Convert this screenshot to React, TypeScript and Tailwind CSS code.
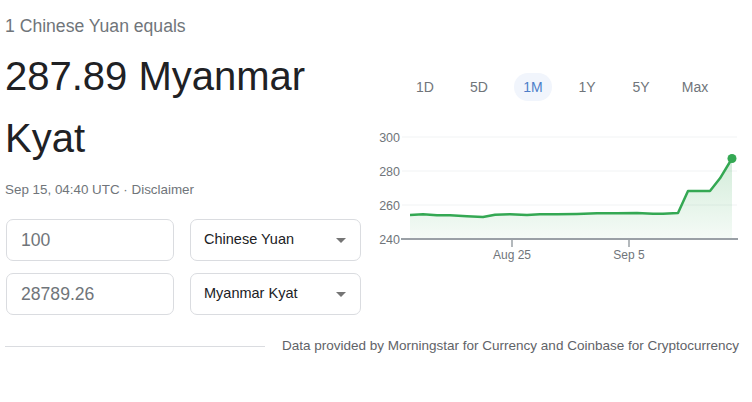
const line: [number, number][] = [
  [410, 215], [423, 214.3], [437, 215.3], [450, 215.3], [467, 216.3], [483, 217],
  [495, 214.7], [510, 214.3], [527, 215], [540, 214.3], [557, 214.3], [577, 214],
  [597, 213.3], [617, 213.3], [637, 213], [653, 213.7], [663, 213.7], [678, 213],
  [688, 191], [710, 191], [720, 178.3], [732, 158.5],
];

const tabs = ['1D', '5D', '1M', '1Y', '5Y', 'Max'];

const Chart = () => {
  const d = line.map(([x, y], i) => `${i ? 'L' : 'M'}${x} ${y}`).join(' ');
  const area = `${d} L732 239 L410 239 Z`;
  return (
    <svg width="382" height="150" viewBox="370 120 382 150" className="block">
      <defs>
        <linearGradient id="fill" x1="0" y1="0" x2="0" y2="1">
          <stop offset="0%" stopColor="#34a853" stopOpacity="0.22" />
          <stop offset="100%" stopColor="#34a853" stopOpacity="0.05" />
        </linearGradient>
      </defs>
      {[137, 171, 205].map((y) => (
        <line key={y} x1="402" x2="737" y1={y} y2={y} stroke="#f1f3f4" strokeWidth="1" />
      ))}
      {[
        ['300', 137],
        ['280', 171],
        ['260', 205],
        ['240', 239],
      ].map(([t, y]) => (
        <text
          key={t}
          x="400"
          y={Number(y) + 4.5}
          textAnchor="end"
          fontSize="12.5"
          fill="#70757a"
          fontFamily="'Liberation Sans', Arial, sans-serif"
        >
          {t}
        </text>
      ))}
      <path d={area} fill="url(#fill)" />
      <line x1="401" x2="738" y1="239" y2="239" stroke="#9aa0a6" strokeWidth="2" />
      <line x1="512" x2="512" y1="239" y2="247" stroke="#9aa0a6" strokeWidth="1.5" />
      <line x1="629" x2="629" y1="239" y2="247" stroke="#9aa0a6" strokeWidth="1.5" />
      <text x="512" y="259" textAnchor="middle" fontSize="12" fill="#70757a" fontFamily="'Liberation Sans', Arial, sans-serif">
        Aug 25
      </text>
      <text x="629" y="259" textAnchor="middle" fontSize="12" fill="#70757a" fontFamily="'Liberation Sans', Arial, sans-serif">
        Sep 5
      </text>
      <path d={d} fill="none" stroke="#34a853" strokeWidth="2.5" strokeLinejoin="round" />
      <circle cx="732" cy="158.5" r="4.5" fill="#34a853" />
    </svg>
  );
};

const Select = ({ label }: { label: string }) => (
  <div className="flex h-[42px] w-[171px] items-center justify-between rounded-[7px] border border-[#dadce0] pl-[13px] pr-[14px] text-[14.5px] text-[#202124]">
    <span>{label}</span>
    <span className="h-0 w-0 border-x-[5px] border-t-[5px] border-x-transparent border-t-[#757575]" />
  </div>
);

const Amount = ({ value }: { value: string }) => (
  <div className="flex h-[42px] w-[168px] items-center rounded-[7px] border border-[#dadce0] pl-[14px] text-[17.6px] text-[#70757a]">
    {value}
  </div>
);

const App = () => {
  return (
    <div className="h-[402px] w-[752px] overflow-hidden bg-white font-['Liberation_Sans',Arial,sans-serif]">
      <div className="flex">
        <div className="ml-[5px] w-[357px] pt-[14px]">
          <p className="text-[17.6px] leading-[24px] text-[#70757a]">1 Chinese Yuan equals</p>
          <p className="mt-[7px] text-[40px] leading-[62px] text-[#202124]">287.89 Myanmar Kyat</p>
          <p className="mt-[11px] text-[13.4px] leading-[20px] text-[#70757a]">
            Sep 15, 04:40 UTC · Disclaimer
          </p>
          <div className="mt-[19px] flex flex-col gap-[12px] pl-px">
            <div className="flex gap-[16px]">
              <Amount value="100" />
              <Select label="Chinese Yuan" />
            </div>
            <div className="flex gap-[16px]">
              <Amount value="28789.26" />
              <Select label="Myanmar Kyat" />
            </div>
          </div>
        </div>
        <div className="ml-[8px] flex-1 pt-[73px]">
          <div className="ml-[28px] flex">
            {tabs.map((t) => (
              <div key={t} className="flex w-[54px] justify-center">
                <span
                  className={`flex h-[28px] items-center rounded-full px-[9px] text-[14px] ${
                    t === '1M' ? 'bg-[#f1f5fc] text-[#4d7ec9]' : 'text-[#70757a]'
                  }`}
                >
                  {t}
                </span>
              </div>
            ))}
          </div>
          <div className="mt-[19px]">
            <Chart />
          </div>
        </div>
      </div>
      <div className="mt-[21px] flex items-center">
        <div className="ml-[5px] h-px w-[260px] bg-[#dadce0]" />
        <p className="ml-[17px] whitespace-nowrap text-[13.5px] leading-[20px] text-[#5f6368]">
          Data provided by Morningstar for Currency and Coinbase for Cryptocurrency
        </p>
      </div>
    </div>
  );
};

export default App;
